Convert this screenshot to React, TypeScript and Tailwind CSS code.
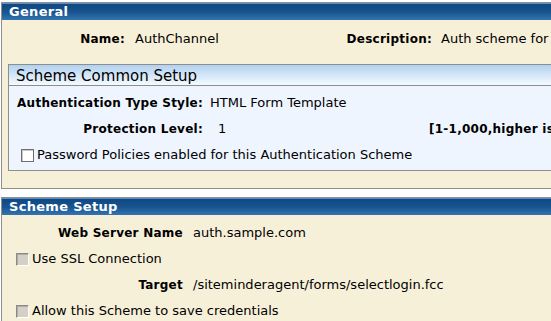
import React from 'react';

const Box: React.FC<{ disabled?: boolean }> = ({ disabled }) => (
  <span
    className={
      disabled
        ? 'inline-block shrink-0 w-[13px] h-[13px] border border-[#8a8a8a] border-r-white border-b-white bg-[#d4d0c8] shadow-[inset_1px_1px_0_#b0aca4]'
        : 'inline-block shrink-0 w-[13px] h-[13px] border border-[#6f6f6f] bg-white shadow-[inset_1px_1px_0_#c8c8c8]'
    }
  />
);

const BlueHeader: React.FC<{ title: string }> = ({ title }) => (
  <div className="h-[17px] bg-gradient-to-b from-[#0f4883] via-[#17548f] to-[#3574b0] border-t border-[#5e8fc4] pl-[7px] text-[13px] font-bold leading-[15px] tracking-[0.3px] text-white">
    {title}
  </div>
);

export default function App() {
  return (
    <div className="w-[551px] h-[321px] overflow-hidden bg-white font-['DejaVu_Sans',Verdana,sans-serif] text-[13px] text-black">
      <div className="pt-[2px] pl-[1px]">
        {/* General */}
        <section className="w-[720px] border border-[#8e8e8e] bg-[#f7f0d9]">
          <BlueHeader title="General" />
          <div className="flex h-[26px] items-center mt-[6px]">
            <div className="w-[123px] text-right text-[12px] font-bold tracking-[0.25px]">Name:</div>
            <div className="w-[160px] pl-[10px]">AuthChannel</div>
            <div className="w-[147px] text-right text-[12px] font-bold tracking-[0.25px]">Description:</div>
            <div className="pl-[9px]">Auth scheme for</div>
          </div>

          {/* Scheme Common Setup */}
          <div className="ml-[6px] mt-[12px] mb-[17px] border border-[#8e8e8e] bg-[#eef5fe]">
            <div className="h-[21px] border-b border-[#8e8e8e] bg-gradient-to-b from-[#b2d1ef] to-[#f4fbff] pl-[7px] text-[15px] leading-[22px]">
              Scheme Common Setup
            </div>
            <div className="pt-[4px] pb-[2px] pl-[8px]">
              <div className="flex h-[26px] items-center">
                <div className="w-[186px] text-right text-[12px] font-bold tracking-[0.25px] whitespace-nowrap">Authentication Type Style:</div>
                <div className="pl-[7px]">HTML Form Template</div>
              </div>
              <div className="flex h-[26px] items-center">
                <div className="w-[186px] text-right text-[12px] font-bold tracking-[0.25px]">Protection Level:</div>
                <div className="w-[226px] pl-[15px]">1</div>
                <div className="text-[12px] font-bold tracking-[0.25px] whitespace-nowrap">[1-1,000,higher is more secure]</div>
              </div>
              <div className="flex h-[26px] items-center gap-[3px] pl-[4px]">
                <Box />
                <span className="whitespace-nowrap">Password Policies enabled for this Authentication Scheme</span>
              </div>
            </div>
          </div>
        </section>

        {/* Scheme Setup */}
        <section className="mt-[8px] w-[720px] border border-[#8e8e8e] border-b-0 bg-[#f7f0d9] pb-[10px]">
          <BlueHeader title="Scheme Setup" />
          <div className="pt-[5px]">
            <div className="flex h-[26px] items-center">
              <div className="w-[181px] text-right text-[12px] font-bold tracking-[0.25px]">Web Server Name</div>
              <div className="pl-[10px]">auth.sample.com</div>
            </div>
            <div className="flex h-[26px] items-center gap-[3px] pl-[14px]">
              <Box disabled />
              <span>Use SSL Connection</span>
            </div>
            <div className="flex h-[26px] items-center">
              <div className="w-[181px] text-right text-[12px] font-bold tracking-[0.25px]">Target</div>
              <div className="pl-[10px]">/siteminderagent/forms/selectlogin.fcc</div>
            </div>
            <div className="flex h-[26px] items-center gap-[3px] pl-[14px]">
              <Box disabled />
              <span>Allow this Scheme to save credentials</span>
            </div>
          </div>
        </section>
      </div>
    </div>
  );
}
